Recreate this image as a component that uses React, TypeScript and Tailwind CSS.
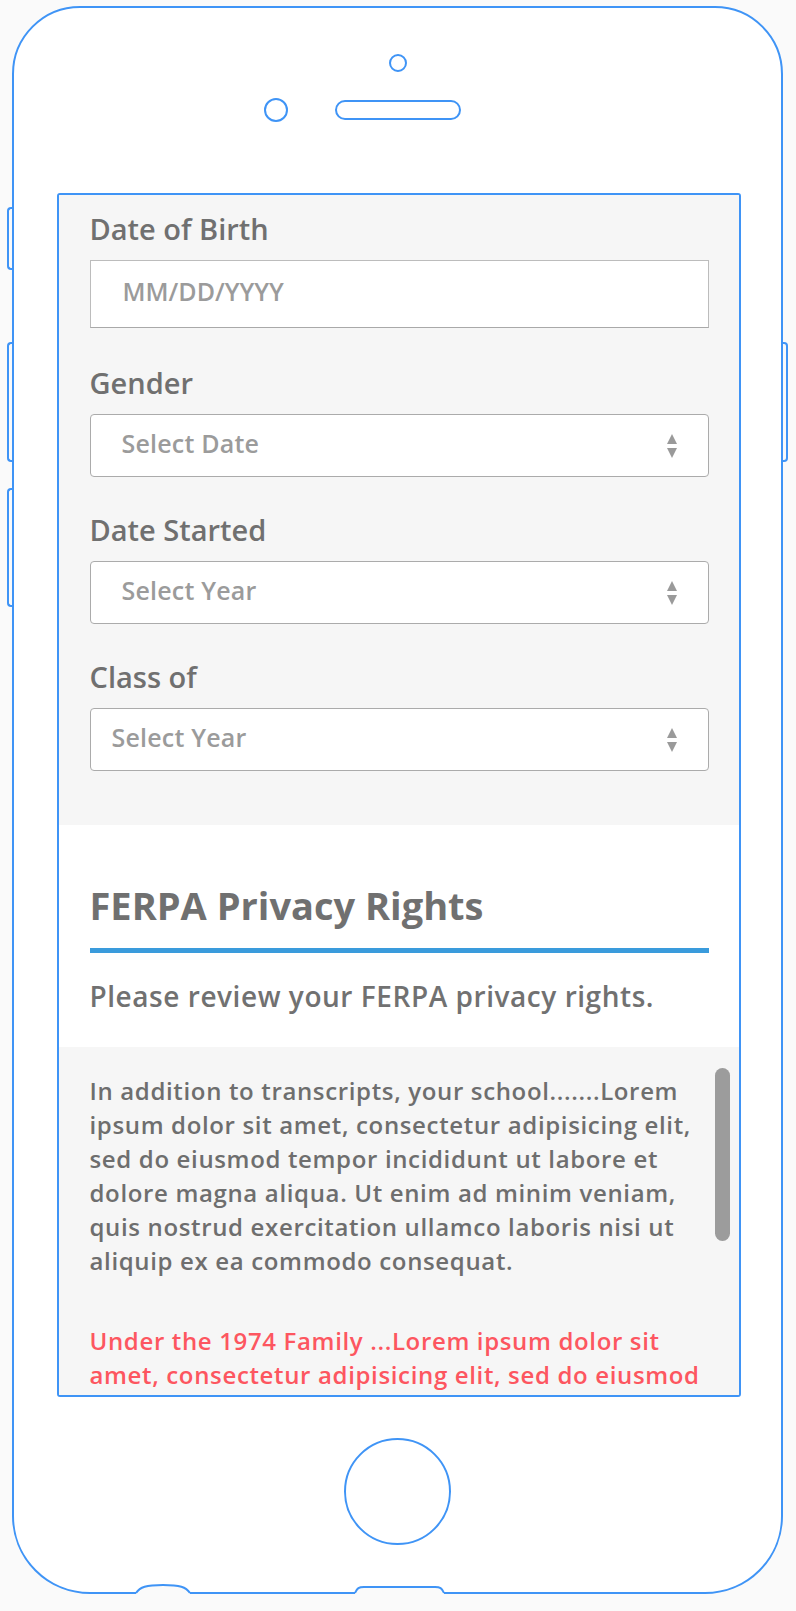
import React from 'react';

const BLUE = 'border-[#3f94f6]';

function Arrows() {
  return (
    <svg width="10" height="24" viewBox="0 0 10 24" className="shrink-0">
      <polygon points="5,0 10,10 0,10" fill="#9a9a9a" />
      <polygon points="0,14 10,14 5,24" fill="#9a9a9a" />
    </svg>
  );
}

function Label({ children, className = '' }: { children: React.ReactNode; className?: string }) {
  return <div className={`text-[29px] leading-[40px] font-semibold text-[#707070] ${className}`}>{children}</div>;
}

function Select({ text, pad = 'pl-[31px]' }: { text: string; pad?: string }) {
  return (
    <div className={`mt-[11px] h-[63px] bg-white border border-[#ababab] rounded-[4px] flex items-center justify-between ${pad} pr-[31px]`}>
      <span className="text-[25px] leading-[30px] font-semibold text-[#9b9b9b] mb-[6px] tracking-[0.2px]">{text}</span>
      <Arrows />
    </div>
  );
}

export default function App() {
  return (
    <div className="min-h-[1611px] bg-[#fafafa] pt-[6px] pl-[12px] font-['Open_Sans',sans-serif]">
      {/* phone body */}
      <div className={`relative w-[771px] h-[1588px] bg-white border-2 ${BLUE} rounded-t-[68px] rounded-b-[78px] flex flex-col items-center`}>
        {/* side buttons */}
        <div className={`absolute -left-[7px] top-[199px] w-[6px] h-[63px] border-2 border-r-0 ${BLUE} rounded-l-[4px]`} />
        <div className={`absolute -left-[7px] top-[334px] w-[6px] h-[120px] border-2 border-r-0 ${BLUE} rounded-l-[4px]`} />
        <div className={`absolute -left-[7px] top-[480px] w-[6px] h-[119px] border-2 border-r-0 ${BLUE} rounded-l-[4px]`} />
        <div className={`absolute -right-[7px] top-[334px] w-[6px] h-[120px] border-2 border-l-0 ${BLUE} rounded-r-[4px]`} />

        {/* earpiece area */}
        <div className={`mt-[46px] w-[18px] h-[18px] rounded-full border-2 ${BLUE}`} />
        <div className="mt-[26px] flex items-center gap-[47px]">
          <div className={`w-[24px] h-[24px] rounded-full border-2 ${BLUE}`} />
          <div className={`w-[126px] h-[20px] rounded-full border-2 ${BLUE}`} />
          <div className="w-[24px] h-[24px]" />
        </div>

        {/* screen */}
        <div className={`mt-[71px] ml-[2px] w-[684px] h-[1204px] border-2 ${BLUE} rounded-[3px] flex flex-col overflow-hidden`}>
          <div className="bg-[#f6f6f6] pl-[31px] pr-[30px] pt-[14px] pb-[54px]">
            <Label>Date of Birth</Label>
            <div className="mt-[11px] h-[68px] bg-white border border-[#bcbcbc] border-b-[#a9a9a9] pl-[32px] pt-[15px]">
              <span className="text-[25px] leading-[30px] font-semibold text-[#9b9b9b]">MM/DD/YYYY</span>
            </div>

            <Label className="mt-[35px]">Gender</Label>
            <Select text="Select Date" />

            <Label className="mt-[33px]">Date Started</Label>
            <Select text="Select Year" />

            <Label className="mt-[33px]">Class of</Label>
            <Select text="Select Year" pad="pl-[21px]" />
          </div>

          <div className="bg-white pl-[31px] pr-[30px] pt-[57px] pb-[32px]">
            <h2 className="text-[38px] leading-[46px] font-bold text-[#707070]">FERPA Privacy Rights</h2>
            <div className="mt-[20px] h-[5px] bg-[#3a9bdc]" />
            <p className="mt-[24px] text-[28px] leading-[38px] font-semibold text-[#717171] tracking-[0.55px]">
              Please review your FERPA privacy rights.
            </p>
          </div>

          <div className="relative flex-1 bg-[#f6f6f6] pl-[31px] pr-[30px] pt-[27px] overflow-hidden">
            <p className="text-[24px] leading-[34px] font-semibold text-[#6e6e6e] tracking-[0.65px]">
              In addition to transcripts, your school.......Lorem ipsum dolor sit amet, consectetur adipisicing elit, sed do
              eiusmod tempor incididunt ut labore et dolore magna aliqua. Ut enim ad minim veniam, quis nostrud exercitation
              ullamco laboris nisi ut aliquip ex ea commodo consequat.
            </p>
            <p className="mt-[46px] text-[24px] leading-[34px] font-semibold text-[#fd5660] tracking-[0.65px]">
              Under the 1974 Family ...Lorem ipsum dolor sit amet, consectetur adipisicing elit, sed do eiusmod tempor
              incididunt ut labore et dolore magna aliqua. Ut enim ad minim veniam, quis nostrud exercitation.
            </p>
            <div className="absolute top-[21px] right-[9px] w-[15px] h-[173px] rounded-full bg-[#9c9c9c]" />
          </div>
        </div>

        {/* home button */}
        <div className={`mt-[41px] w-[107px] h-[107px] rounded-full border-2 ${BLUE}`} />

        {/* bottom edge notches */}
        <svg className="absolute -left-[2px] -bottom-[2px]" width="771" height="16" viewBox="0 0 771 16">
          <path d="M124 15 C128 9, 134 7, 151 7 C168 7, 174 9, 178 15 L178 17 L124 17 Z" fill="#fafafa" />
          <path d="M124 15 C128 9, 134 7, 151 7 C168 7, 174 9, 178 15" fill="none" stroke="#3f94f6" strokeWidth="2" />
          <path d="M343 15 C345 10, 347 9, 352 9 L423 9 C428 9, 430 10, 432 15 L432 17 L343 17 Z" fill="#fafafa" />
          <path d="M343 15 C345 10, 347 9, 352 9 L423 9 C428 9, 430 10, 432 15" fill="none" stroke="#3f94f6" strokeWidth="2" />
        </svg>
      </div>
    </div>
  );
}
